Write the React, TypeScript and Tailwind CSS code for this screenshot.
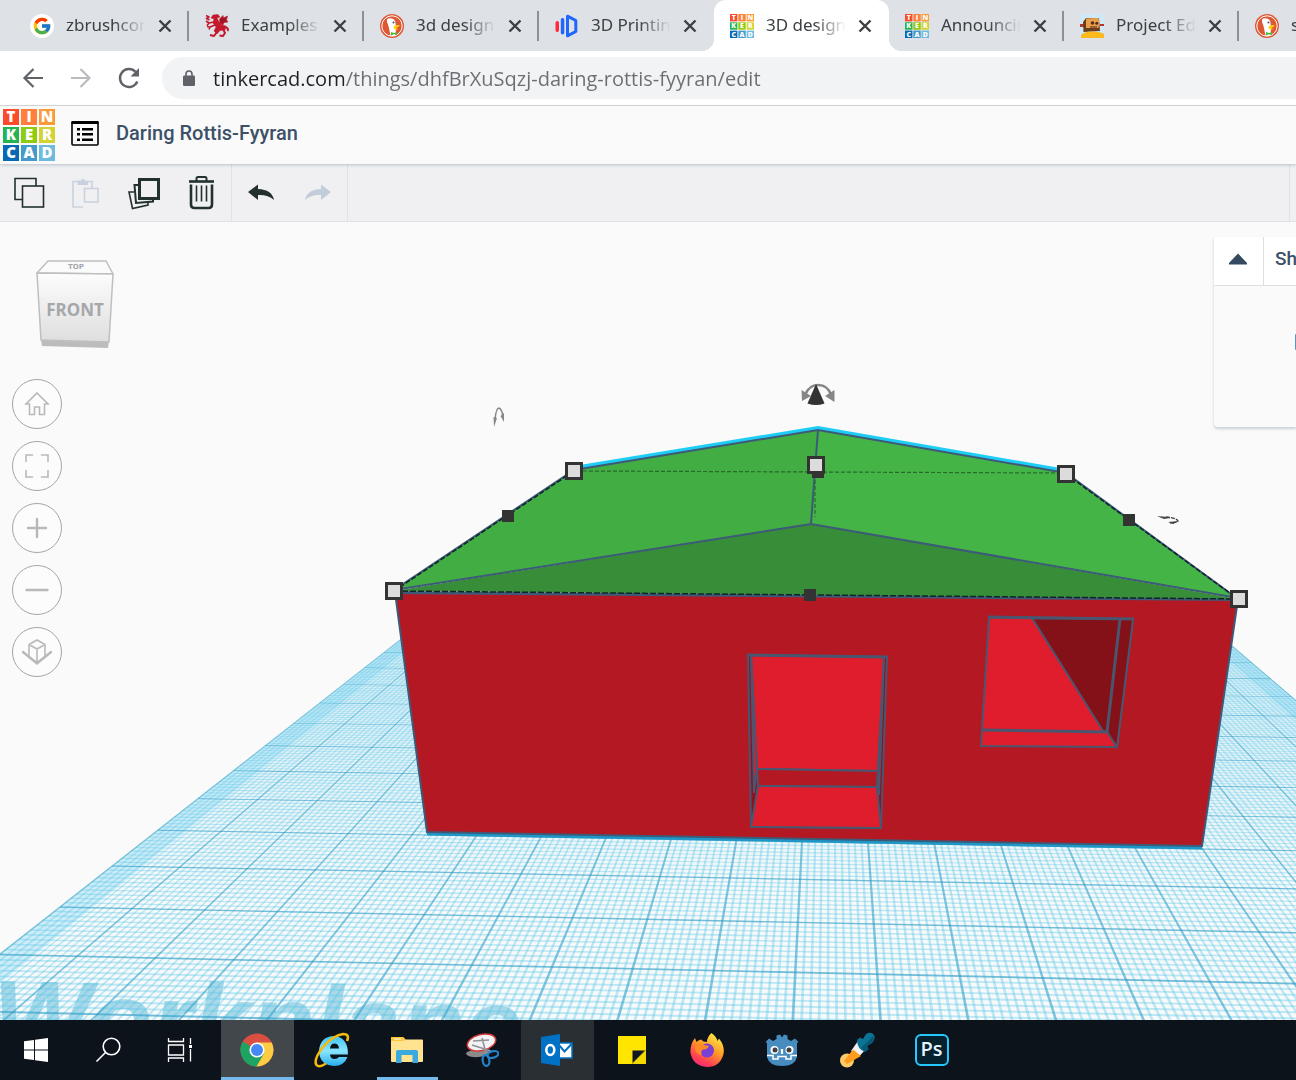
import type { ReactNode } from 'react';
import { FcGoogle } from 'react-icons/fc';

const LOGO_CELLS = [
  ['T', '#fb4b2b'], ['I', '#ff7f3b'], ['N', '#fc9a36'],
  ['K', '#24b552'], ['E', '#8fcb10'], ['R', '#d3d433'],
  ['C', '#0869b5'], ['A', '#4499cd'], ['D', '#6ebbe0'],
];

const TinkercadLogo = ({ className }: { className: string }) => (
  <svg viewBox="0 0 52 52" className={className} aria-hidden="true">
    {LOGO_CELLS.map(([letter, color], i) => {
      const x = (i % 3) * 18;
      const y = Math.floor(i / 3) * 18;
      return (
        <g key={letter}>
          <rect x={x} y={y} width="16" height="16" fill={color} />
          <text x={x + 8} y={y + 13} textAnchor="middle" fontSize="15" fontWeight="800" fill="#fff" fontFamily="Open Sans, sans-serif">
            {letter}
          </text>
        </g>
      );
    })}
  </svg>
);

const DragonIcon = () => (
  <svg viewBox="0 0 24 24" className="size-6" fill="none" stroke="#c4182c" strokeLinejoin="round">
    <path d="M8 1L13 0.500L15 3L12 4L13.500 7L17 11L21 12L20 16L15 16.500L12 20L9 17L11 13L8 9L9 5L6 4Z" fill="#c4182c" strokeWidth="0.500" />
    <path d="M9 8L4 9L1 7M4 9L2 11.500M10 11L5 13L2 12.500M5 13L4 15.500M1 1.500L4 3L1.500 4.500L4.500 6" strokeWidth="1.600" />
    <path d="M15 9L14.500 5L18 1.500L18.500 4L22.500 2L21.500 6L23 8L19 8.500L18 11Z" fill="#a31526" strokeWidth="0.600" />
    <path d="M12 18L9 22L5 21M18 15L20 19L18 22L14.500 21.500M20 13Q24 14 22.500 17" strokeWidth="2" />
  </svg>
);

const DuckIcon = () => (
  <svg viewBox="0 0 24 24" className="size-6">
    <circle cx="12" cy="12" r="12" fill="#de5833" />
    <circle cx="12" cy="12" r="10.2" fill="none" stroke="#fff" strokeWidth="1" />
    <path d="M7 5.500C9 3.600 14 4 15.300 7.500L16 13L15.500 21.500Q12.500 22.500 10.500 21.500L8.500 12Q6.300 8 7 5.500Z" fill="#fff" />
    <path d="M14 12Q18 10.500 20 11.500Q18 13.500 15.500 14Q18 14.500 18 15.300Q14 16 13.500 14Z" fill="#fdd20a" />
    <path d="M11 18L14 19L17 18V21L14 20.300L11 21.500Z" fill="#4cba3c" />
    <circle cx="13.500" cy="8.500" r="1" fill="#2d4f8e" />
  </svg>
);

const PrintingIcon = () => (
  <svg viewBox="0 0 24 24" className="size-6">
    <rect x="0.500" y="7" width="3.500" height="11" rx="1.700" fill="#ff2b3d" />
    <rect x="5.800" y="4" width="3.500" height="16.500" rx="1.700" fill="#1f66ff" />
    <path d="M12.500 2.200L20.800 6.500V17.500L12.500 21.800Z" fill="none" stroke="#1f66ff" strokeWidth="3" strokeLinejoin="round" />
  </svg>
);

const RobotIcon = () => (
  <svg viewBox="0 0 24 24" className="size-6">
    <rect width="24" height="24" rx="3" fill="#cfe9f8" />
    <path d="M0 10H4V13H0ZM20 10H24V12H20Z" fill="#b8342c" />
    <path d="M3 8L6 4L19 4.500L20 17L3.500 18Z" fill="#6b3d1e" />
    <path d="M6 4.500L18 4L19.500 7L18.500 14L6 14Z" fill="#e8a04a" />
    <circle cx="12.500" cy="9" r="1.800" fill="#5a2a18" />
    <circle cx="16.800" cy="9.300" r="1.500" fill="#5a2a18" />
    <path d="M10 12.500H17V13.500H10Z" fill="#4c2413" />
    <path d="M1 24V21Q4 17.500 12 17.500Q21 17.500 24 20V24Z" fill="#fbb91b" />
  </svg>
);

const CloseIcon = () => (
  <svg viewBox="0 0 14 14" className="size-3.5">
    <path d="M1.500 1.500L12.500 12.500M12.500 1.500L1.500 12.500" stroke="#3c4043" strokeWidth="2.400" />
  </svg>
);

type Tab = { title: string; icon: ReactNode; active?: boolean; divider?: boolean };

const TABS: Tab[] = [
  {
    title: 'zbrushcore',
    icon: <span className="flex size-6 items-center justify-center rounded-full bg-white"><FcGoogle className="size-5" /></span>,
    divider: true,
  },
  { title: 'Examples', icon: <DragonIcon />, divider: true },
  { title: '3d design', icon: <DuckIcon />, divider: true },
  { title: '3D Printing', icon: <PrintingIcon /> },
  { title: '3D design', icon: <TinkercadLogo className="size-6" />, active: true },
  { title: 'Announcing', icon: <TinkercadLogo className="size-6" />, divider: true },
  { title: 'Project Edit', icon: <RobotIcon />, divider: true },
  { title: 'stl files', icon: <DuckIcon /> },
];

const TabStrip = () => (
  <nav aria-label="Browser tabs" className="flex h-[51px] overflow-hidden bg-[#dee1e6] pl-3.5">
    {TABS.map((tab, i) => (
      <div
        key={i}
        className={`relative flex w-[175px] shrink-0 items-center pl-4 ${tab.active ? 'rounded-t-xl bg-white' : ''}`}
      >
        {tab.active && (
          <>
            <span className="absolute bottom-0 -left-3 size-3 bg-[radial-gradient(circle_at_0_0,#dee1e6_12px,#fff_12px)]" />
            <span className="absolute -right-3 bottom-0 size-3 bg-[radial-gradient(circle_at_100%_0,#dee1e6_12px,#fff_12px)]" />
          </>
        )}
        {tab.icon}
        <a
          href="#"
          className="ml-3 w-20 overflow-hidden pb-0.5 font-['Noto_Sans',sans-serif] text-[17px] leading-6 whitespace-nowrap text-[#3c4043] [mask-image:linear-gradient(to_right,black_60%,transparent)]"
        >
          {tab.title}
        </a>
        <button type="button" aria-label="Close tab" className="ml-3">
          <CloseIcon />
        </button>
        {tab.divider && <span className="absolute top-[11px] right-0 h-[30px] w-0.5 bg-[#8d9196]" />}
      </div>
    ))}
  </nav>
);

const AddressBar = () => (
  <div className="flex h-[55px] items-center border-b border-[#d9dadc] bg-white">
    <div className="flex gap-6 pl-[21px] text-[#5f6368]">
      <button type="button" aria-label="Back">
        <svg viewBox="0 0 24 24" className="size-6" fill="none" stroke="currentColor" strokeWidth="2.200">
          <path d="M22 12H4M12.500 3L3.500 12L12.500 21" />
        </svg>
      </button>
      <button type="button" aria-label="Forward" className="text-[#b9bbbe]">
        <svg viewBox="0 0 24 24" className="size-6" fill="none" stroke="currentColor" strokeWidth="2.200">
          <path d="M2 12H20M11.500 3L20.500 12L11.500 21" />
        </svg>
      </button>
      <button type="button" aria-label="Reload">
        <svg viewBox="0 0 24 24" className="size-6" fill="none" stroke="currentColor" strokeWidth="2.400">
          <path d="M20.300 15.500A9 9 0 1 1 18.500 5.800" />
          <path d="M22 2V10.500H13.500Z" fill="currentColor" stroke="none" />
        </svg>
      </button>
    </div>
    <label className="ml-[21px] flex h-[42px] flex-1 items-center rounded-l-full bg-[#f1f3f4] pl-[21px]">
      <svg viewBox="0 0 12 16" className="h-4 w-3" fill="#5f6368">
        <rect y="5.500" width="12" height="10.500" rx="1.300" />
        <path d="M3 6.500V4A3 3 0 0 1 9 4V6.500" fill="none" stroke="#5f6368" strokeWidth="1.600" />
      </svg>
      <input
        aria-label="Address"
        defaultValue="tinkercad.com/things/dhfBrXuSqzj-daring-rottis-fyyran/edit"
        className="ml-[18px] flex-1 bg-[linear-gradient(to_right,#202124_131px,#6a6e72_131px)] bg-clip-text pt-0.5 text-[20px] text-transparent outline-none"
      />
    </label>
  </div>
);

const DesignHeader = () => (
  <header className="relative z-10 flex h-[58px] items-center bg-[#fafafa] pl-[3px] shadow-[0_1px_3px_rgba(60,85,120,0.3)]">
    <TinkercadLogo className="size-[52px]" />
    <button type="button" aria-label="Designs" className="mb-1 ml-4">
      <svg viewBox="0 0 28 25" className="h-[25px] w-7" fill="#000">
        <rect x="1" y="1" width="26" height="23" rx="1" fill="none" stroke="#000" strokeWidth="1.600" />
        <rect x="0.500" y="0" width="27" height="3" />
        <path d="M6 7H9V9.500H6ZM6 12H9V14.500H6ZM6 17.500H9V20H6ZM11 7H22V9.500H11ZM11 12H22V14.500H11ZM11 17.500H22V20H11Z" />
      </svg>
    </button>
    <h1 className="mb-1 ml-[17px] font-['Roboto',sans-serif] text-[20px] font-medium text-[#3c5168]">Daring Rottis-Fyyran</h1>
  </header>
);

const EditToolbar = () => (
  <div className="flex h-[58px] border-b border-[#dfe1e5] bg-[#f0f0f2] text-[#22302f]">
    <div className="flex w-[232px] items-center border-r border-[#dfe1e5] pl-3">
      <button type="button" aria-label="Copy">
        <svg viewBox="0 0 34 34" className="size-[34px]" fill="none" stroke="currentColor" strokeWidth="1.600">
          <path d="M10 23.500H3V2.500H24V10" />
          <rect x="10.500" y="10" width="21" height="21" />
        </svg>
      </button>
      <button type="button" aria-label="Paste" className="ml-[22px] text-[#c9d2dc]" disabled>
        <svg viewBox="0 0 34 34" className="size-[34px]" fill="none" stroke="currentColor" strokeWidth="1.600">
          <path d="M15 31H5V5.500H10M20 5.500H24V12" />
          <path d="M9.500 4.500H13Q15 0.500 17 4.500H20V9H9.500Z" fill="currentColor" stroke="none" />
          <rect x="16.500" y="12.500" width="13.500" height="13.500" />
        </svg>
      </button>
      <button type="button" aria-label="Duplicate" className="ml-[25px]">
        <svg viewBox="0 0 34 34" className="size-[34px]" fill="none" stroke="currentColor" strokeWidth="1.600">
          <rect x="12.500" y="3.500" width="19" height="19" strokeWidth="3" />
          <path d="M12 9H7.500L9 27L26 25.500V23" strokeWidth="2" />
          <path d="M7 16H2L5.500 32.500L21 29V27" />
        </svg>
      </button>
      <button type="button" aria-label="Delete" className="ml-[23px]">
        <svg viewBox="0 0 34 34" className="size-[34px]" fill="none" stroke="currentColor" strokeWidth="2">
          <path d="M5 5.500H30" strokeWidth="2.600" />
          <path d="M12.500 5V2.500Q12.500 1 14 1H21Q22.500 1 22.500 2.500V5" />
          <path d="M7 8.500V28.500Q7 32 10.500 32H24.500Q28 32 28 28.500V8.500" strokeWidth="2.600" />
          <path d="M12.500 9.500V25.500M17.500 9.500V25.500M22.500 9.500V25.500" strokeWidth="1.600" />
        </svg>
      </button>
    </div>
    <div className="flex w-[116px] items-center border-r border-[#dfe1e5] pl-4">
      <button type="button" aria-label="Undo">
        <svg viewBox="0 0 26 18" className="h-[18px] w-[26px]" fill="currentColor">
          <path d="M0 8L10 0.500V5Q24 5.500 26 16Q20 10.500 10 11V16Z" />
        </svg>
      </button>
      <button type="button" aria-label="Redo" className="ml-[31px] text-[#c3cdd9]" disabled>
        <svg viewBox="0 0 26 18" className="h-[18px] w-[26px]" fill="currentColor">
          <path d="M26 8L16 0.500V5Q2 5.500 0 16Q6 10.500 16 11V16Z" />
        </svg>
      </button>
    </div>
    <div className="mr-1.5 flex-1 border-r border-[#dfe1e5]" />
  </div>
);

// Projects workplane units (20 columns wide) to canvas pixels.
const project = (u: number, v: number) => {
  const s = u / 20;
  const t = v / 10;
  const w = 1 - 0.02889 * s - 0.42131 * t;
  const x = (384.3 + 831 * s - 349.6 * t) / w;
  const y = (652.3 - 8.9 * s - 127.4 * t) / w;
  return `${x.toFixed(2)} ${y.toFixed(2)}`;
};

const FAR = -3;
const NEAR = 13;

const quad = (u0: number, v0: number, u1: number, v1: number) =>
  `M${project(u0, v0)}L${project(u1, v0)}L${project(u1, v1)}L${project(u0, v1)}Z`;

const gridLines = (step: number, half: number) => {
  const columns: string[] = [];
  const rows: string[] = [];
  for (let i = 0; i <= 20 / step; i++) columns.push(quad(i * step - half, FAR, i * step + half, NEAR));
  for (let i = 0; i <= (NEAR - FAR) / step; i++) {
    const v = FAR + i * step;
    rows.push(quad(0, v - half, 20, v + half));
  }
  return { columns: columns.join(''), rows: rows.join('') };
};

const minor = gridLines(0.1, 0.016);
const major = gridLines(1, 0.015);

const Handle = ({ x, y }: { x: number; y: number }) => (
  <rect x={x - 7.5} y={y - 7.5} width="15" height="15" fill="#dcdcdc" stroke="#333" strokeWidth="3" />
);

const SideHandle = ({ x, y }: { x: number; y: number }) => (
  <rect x={x - 6} y={y - 6} width="12" height="12" fill="#333" />
);

const Scene = () => (
  <svg
    viewBox="0 222 1296 798"
    preserveAspectRatio="xMinYMin slice"
    className="absolute inset-0 size-full"
    role="img"
    aria-label="House model on the workplane"
  >
    <defs>
      <linearGradient id="distance" gradientUnits="userSpaceOnUse" x1="0" y1="640" x2="0" y2="900">
        <stop offset="0" stopColor="#6fcbec" stopOpacity="0.3" />
        <stop offset="1" stopColor="#6fcbec" stopOpacity="0" />
      </linearGradient>
    </defs>
    <path d={quad(0, FAR, 20, NEAR)} fill="#f8fafa" />
    <path d={quad(0, FAR, 20, NEAR)} fill="url(#distance)" />
    <path d={quad(0, FAR, 0.45, NEAR)} fill="#8fdaf2" opacity="0.4" />
    <path d={quad(19.55, FAR, 20, NEAR)} fill="#8fdaf2" opacity="0.4" />
    <text
      x="-8"
      y="1053"
      transform="rotate(1 0 1053)"
      fontFamily="Liberation Sans, sans-serif"
      fontSize="104"
      fontWeight="700"
      fontStyle="italic"
      fill="#a9d9e8"
    >
      Workplane
    </text>
    <path d={minor.columns} fill="#55c4ea" opacity="0.36" />
    <path d={minor.rows} fill="#55c4ea" opacity="0.36" />
    <path d={major.columns} fill="#2a94bd" opacity="0.42" />
    <path d={major.rows} fill="#2a94bd" opacity="0.5" />

    {/* walls */}
    <path d="M427 833L1202 847" stroke="#1f97c6" strokeWidth="5" />
    <path d="M395 592L1238 599L1202 846L427 832Z" fill="#b41822" stroke="#3d5a78" strokeWidth="2" strokeLinejoin="round" />

    {/* door */}
    <g stroke="#4a5670" strokeWidth="2" fill="none">
      <path d="M748 655L887 657L881 828L751 827Z" fill="#8c1220" />
      <path d="M751 655L884 657L878 771L757 769Z" fill="#e01d2c" />
      <path d="M751 655L754 793L757 769ZM884 657L879 795L878 771Z" fill="#e01d2c" />
      <path d="M757 769L878 771L877 787L758 786Z" fill="#b41822" />
      <path d="M758 786L877 787L881 828L751 827Z" fill="#e01d2c" />
      <path d="M747 655L888 657" strokeWidth="3" />
    </g>

    {/* window */}
    <g stroke="#4a5670" strokeWidth="2" fill="none">
      <path d="M989 617L1133 619L1117 747L981 746Z" fill="#e01d2c" />
      <path d="M1032 618L1133 619L1117 747L1107 732L1103 731Z" fill="#841018" />
      <path d="M1120 619L1107 732L982 730" strokeWidth="3" />
      <path d="M988 617L1134 619" strokeWidth="3" />
    </g>

    {/* roof */}
    <path d="M574 468L818 428L1066 471" fill="none" stroke="#1ecdf5" strokeWidth="4" />
    <path d="M394 590L574 470L818 430L811 524Z" fill="#42ad43" />
    <path d="M818 430L1066 473L1238 599L811 524Z" fill="#45b447" />
    <path d="M394 591L811 524L1238 599Z" fill="#378d38" />
    <g fill="none" stroke="#3d5a78" strokeWidth="2">
      <path d="M394 590L574 470L818 430L1066 473L1238 599" />
      <path d="M818 430L811 524M394 590L811 524L1238 598M394 593L1238 600" />
    </g>
    <g fill="none" stroke="#10242a">
      <path d="M394 591L1238 599" strokeWidth="1.500" strokeDasharray="6 2" />
      <path d="M394 591L574 471M1066 474L1238 599" strokeWidth="1.500" strokeDasharray="5 2" />
      <path d="M583 471L1057 473M815 480V517" strokeDasharray="4 2" stroke="#256b2a" strokeWidth="1.200" />
    </g>

    <SideHandle x={508} y={516} />
    <SideHandle x={818} y={472} />
    <SideHandle x={810} y={595} />
    <SideHandle x={1129} y={520} />
    <Handle x={574} y={471} />
    <Handle x={816} y={465} />
    <Handle x={1066} y={474} />
    <Handle x={394} y={591} />
    <Handle x={1239} y={599} />

    {/* rotate arrows and lift cone */}
    <path d="M805 395Q809 385 818 385Q828 385 831 395" fill="none" stroke="#868686" strokeWidth="2.500" />
    <path d="M801.500 390L802 401L811 396ZM834.500 390L834.500 402L825 396Z" fill="#868686" />
    <path d="M816 384L807.500 403.500Q816 406.500 824.500 403.500Z" fill="#333" />
    <path d="M495 420Q496 408 499 408Q502 409 503 417" fill="none" stroke="#868686" strokeWidth="1.500" />
    <path d="M493.500 417L497 418L494 427ZM500.500 416L504 413V422Z" fill="#868686" />
    <path d="M1157 516L1168 517L1170 518L1164 519ZM1168 522L1179 521L1173 524Z" fill="#444" />
    <path d="M1166 517Q1177 518 1178 521Q1176 523 1170 523" fill="none" stroke="#444" strokeWidth="1.300" strokeDasharray="4 1" />
  </svg>
);

const ViewCube = () => (
  <svg viewBox="0 0 80 90" className="ml-6 h-[90px] w-20" role="img" aria-label="View cube">
    <defs>
      <linearGradient id="cubeFront" x1="0" y1="0" x2="0" y2="1">
        <stop offset="0" stopColor="#fdfdfd" />
        <stop offset="1" stopColor="#dedede" />
      </linearGradient>
    </defs>
    <path d="M5 81L73 81L72 89L6 87Z" fill="#bcbcbc" />
    <path d="M12 2L70 2L77 15L1 14Z" fill="#fbfbfb" stroke="#bfbfbf" strokeWidth="1.500" />
    <path d="M1 14L77 15L73 83L5 81Z" fill="url(#cubeFront)" stroke="#bfbfbf" strokeWidth="1.500" />
    <text x="40" y="10" textAnchor="middle" fontSize="7" fontWeight="700" fill="#a5a7ab" fontFamily="DejaVu Sans, sans-serif">TOP</text>
    <text x="39" y="57" textAnchor="middle" fontSize="17" fontWeight="700" fill="#a5a7ab" fontFamily="Noto Sans, sans-serif">FRONT</text>
  </svg>
);

const VIEW_BUTTONS = [
  { label: 'Home view', icon: <path d="M18 7L29 18H25.500V28.500H20.500V21H15.500V28.500H10.500V18H7Z" strokeWidth="1.600" /> },
  { label: 'Fit view', icon: <path d="M7 13.500V7H13.500M22.500 7H29V13.500M29 22.500V29H22.500M13.500 29H7V22.500" strokeWidth="1.600" /> },
  { label: 'Zoom in', icon: <path d="M18 9V27M9 18H27" /> },
  { label: 'Zoom out', icon: <path d="M7.500 18H28.500" /> },
  {
    label: 'Perspective',
    icon: (
      <>
        <path d="M4 18L18 29.500L32 18" />
        <path d="M10 10.500L18 6L26 10.500V23L18 28.500L10 23ZM10 10.500L18 15L26 10.500M18 15V28.500" strokeWidth="1.600" />
      </>
    ),
  },
];

const ViewControls = () => (
  <div className="relative flex w-fit flex-col pt-[37px] pl-3">
    <ViewCube />
    <div className="mt-[30px] flex flex-col gap-3">
      {VIEW_BUTTONS.map(button => (
        <button
          key={button.label}
          type="button"
          aria-label={button.label}
          className="flex size-[50px] items-center justify-center rounded-full border border-[#a3a5a8] bg-[#fcfcfc]"
        >
          <svg viewBox="0 0 36 36" className="size-9" fill="none" stroke="#b9b9b9" strokeWidth="2.400" strokeLinecap="round">
            {button.icon}
          </svg>
        </button>
      ))}
    </div>
  </div>
);

const ShapePanel = () => (
  <section className="absolute top-[15px] right-0 w-[82px] overflow-hidden rounded-bl bg-[#fafafa] shadow-[0_2px_3px_rgba(60,85,120,0.25)]">
    <div className="flex h-[49px] border-b border-[#dcdfe3] bg-white">
      <button type="button" aria-label="Collapse panel" className="flex w-[50px] shrink-0 items-center justify-center border-r border-[#dcdfe3] pr-0.5 pb-1">
        <svg viewBox="0 0 18 12" className="h-3 w-[18px]" fill="#344a60">
          <path d="M9 0.500L18 10V11.500H0V10Z" />
        </svg>
      </button>
      <h2 className="pt-2 pl-[11px] font-['Roboto',sans-serif] text-[19px] font-medium text-[#3c5168]">Shape</h2>
    </div>
    <div className="flex h-[141px] justify-end pt-12">
      <span className="h-4 w-px rounded-l-full bg-[#5b93c4]" />
    </div>
  </section>
);

const WindowsIcon = () => (
  <svg viewBox="0 0 24 24" className="size-6" fill="#fff">
    <path d="M0 3.300L10 2V11.500H0ZM11 1.800L24 0V11.500H11ZM0 12.500H10V22L0 20.700ZM11 12.500H24V24L11 22.200Z" />
  </svg>
);

const SearchIcon = () => (
  <svg viewBox="0 0 26 26" className="size-[26px]" fill="none" stroke="#fff" strokeWidth="1.600">
    <circle cx="16.500" cy="9.500" r="8.300" />
    <path d="M10.500 15.500L1.500 24.500" />
  </svg>
);

const TaskViewIcon = () => (
  <svg viewBox="0 0 26 24" className="h-6 w-[26px]" fill="none" stroke="#fff" strokeWidth="1.300">
    <path d="M1.500 0V3.500H16.500V0M1.500 24V20H16.500V24M1.500 7H16.500V17H1.500ZM23.500 0V6M23.500 11V23.500" />
    <rect x="22" y="7" width="3" height="3" fill="#fff" stroke="none" />
  </svg>
);

const ChromeIcon = () => (
  <svg viewBox="0 0 34 34" className="size-[34px]">
    <circle cx="17" cy="17" r="16.500" fill="#d94f41" />
    <path d="M17 17L2.800 8.600A16.500 16.500 0 0 0 17 33.500L24 21Z" fill="#1da362" />
    <path d="M17 9.500H31.700A16.500 16.500 0 0 1 16.500 33.500L24 20.500Z" fill="#fccc44" />
    <circle cx="17" cy="17" r="7.600" fill="#fff" />
    <circle cx="17" cy="17" r="6" fill="#4688f4" />
  </svg>
);

const ExplorerEIcon = () => (
  <svg viewBox="0 0 36 36" className="size-9" fill="none">
    <defs>
      <linearGradient id="ieBlue" x1="0" y1="0" x2="0" y2="1">
        <stop offset="0" stopColor="#3fc4f4" />
        <stop offset="0.500" stopColor="#8ae6ff" />
        <stop offset="1" stopColor="#27aeea" />
      </linearGradient>
    </defs>
    <path d="M34 22.500H16Q16.500 27 20.500 27Q23.500 27 25 25H33.500Q30 34 20 34Q5.500 33 5 19Q6 4.500 20 4Q34 5 34 22.500ZM16 16.500H25Q24.500 11.500 20.500 11.500Q16.500 11.500 16 16.500Z" fill="url(#ieBlue)" fillRule="evenodd" />
    <path d="M33 9Q36 2 29 2Q20 3 9 15Q-1 28 2.500 33Q5 36 12 31.500" stroke="#f6b90e" strokeWidth="2.600" />
  </svg>
);

const FolderIcon = () => (
  <svg viewBox="0 0 32 28" className="h-7 w-8">
    <path d="M0 2Q0 1 1 1H12L14.500 3.500H31Q32 3.500 32 4.500V25Q32 26 31 26H1Q0 26 0 25Z" fill="#ffe391" />
    <path d="M0 5V2Q0 1 1 1H12L14.500 3.500L12 5Z" fill="#ffc533" />
    <path d="M3 3H10" stroke="#fff" />
    <path d="M5 27V16Q5 14 7 14H25Q27 14 27 16V27H21.500V19H10.500V27Z" fill="#3aa9e0" />
  </svg>
);

const SnipIcon = () => (
  <svg viewBox="0 0 34 34" className="size-[34px]" fill="none">
    <path d="M1 20Q8 14 26 18Q20 25 8 24Q1 23 1 20Z" fill="#8a8a8a" />
    <ellipse cx="16.500" cy="9.500" rx="14.500" ry="8" transform="rotate(-14 16.500 9.500)" fill="#f3f3f5" stroke="#d73a3a" strokeWidth="1.500" />
    <path d="M17 5L21 20M7 12L26 18M8 8L24 7" stroke="#8e9196" strokeWidth="1.500" />
    <ellipse cx="28" cy="21.500" rx="5.500" ry="3.200" transform="rotate(-15 28 21.500)" stroke="#2483cc" strokeWidth="2.200" />
    <ellipse cx="21" cy="27.500" rx="3.300" ry="5.500" transform="rotate(-10 21 27.500)" stroke="#2483cc" strokeWidth="2.200" />
  </svg>
);

const OutlookIcon = () => (
  <svg viewBox="0 0 32 32" className="size-8" fill="none">
    <rect x="17" y="9" width="14" height="15" fill="#fff" stroke="#0072c6" strokeWidth="1.500" />
    <path d="M17 10L23.500 17.500L31 9.500" stroke="#0072c6" strokeWidth="2" />
    <path d="M0 3L19 0V32L0 29Z" fill="#0072c6" />
    <ellipse cx="9.300" cy="16" rx="4" ry="5" stroke="#fff" strokeWidth="2.600" />
  </svg>
);

const NotesIcon = () => (
  <svg viewBox="0 0 28 28" className="size-7">
    <path d="M0 0H28V14L14 28H0Z" fill="#ffe500" />
    <path d="M14.500 14.500H27L14.500 27Z" fill="#111820" />
    <path d="M28 14V28H14Z" fill="#f2d900" />
  </svg>
);

const FirefoxIcon = () => (
  <svg viewBox="0 0 34 34" className="size-[34px]">
    <defs>
      <linearGradient id="foxFlame" x1="0.800" y1="0" x2="0.250" y2="1">
        <stop offset="0" stopColor="#fff04a" />
        <stop offset="0.450" stopColor="#ff9a26" />
        <stop offset="0.800" stopColor="#ff4055" />
        <stop offset="1" stopColor="#f0277c" />
      </linearGradient>
    </defs>
    <path d="M21.500 0Q26 3 27.500 8L29 5.500Q35 13 33.500 21Q30 34 17 34Q3 33 0.500 20Q0 11 5 5L6.500 9Q8 7 11 6.500Q13 9 17 9Q17 4 21.500 0Z" fill="url(#foxFlame)" />
    <circle cx="17" cy="17.500" r="7" fill="#7a3fd4" />
    <path d="M5 14Q9 9 14 12L19 13Q17 17 13 16.500Q10 18 12 22Q5 21 5 14Z" fill="#ff8a24" />
  </svg>
);

const GodotIcon = () => (
  <svg viewBox="0 0 34 34" className="size-[34px]" fill="none">
    <path d="M2 31V10L0.500 9L4 5.500L8 8L11.500 6V2.500L15 1.500L17 4.500L19 1.500L22.500 2.500V6L26 8L30 5.500L33.500 9L32 10V24Q30 33 17 33Q4 33 2 24Z" fill="#478cbf" />
    <path d="M2 22.500H8V26H13V23.500H21V26H26V22.500H32" stroke="#fff" strokeWidth="1.500" />
    <circle cx="9.500" cy="17" r="4" fill="#fff" />
    <circle cx="24.500" cy="17" r="4" fill="#fff" />
    <circle cx="10" cy="17" r="2.500" fill="#414042" />
    <circle cx="24" cy="17" r="2.500" fill="#414042" />
    <path d="M17 16V21" stroke="#fff" strokeWidth="2.200" />
  </svg>
);

const PipetteIcon = () => (
  <svg viewBox="0 0 36 36" className="size-9">
    <circle cx="8" cy="28.500" r="7" fill="#fccb6a" />
    <path d="M19 9L27 17L20.500 24L12 19Z" fill="#f2f2f4" />
    <path d="M5 29L14 17.500L22 24L8 32Z" fill="#ff9c1c" />
    <path d="M18 8L21 5.500L24 7L27 2Q32 -1 35 3Q37 7 33 11L28 14L29.500 17L26 20Q18 17 18 8Z" fill="#0b7494" />
    <path d="M22 16L34 4Q36.500 8 33 11L28 14L29.500 17L26 20Z" fill="#075a75" />
  </svg>
);

const PhotoshopIcon = () => (
  <span className="flex h-8 w-[34px] items-center justify-center rounded-md border-2 border-[#26c9ff] bg-[#04212d] pb-0.5 text-[20px] leading-none font-semibold text-[#e6f6ff]">
    Ps
  </span>
);

const APPS: { label: string; icon: ReactNode; state?: 'focused' | 'running' | 'hover' }[] = [
  { label: 'Chrome', icon: <ChromeIcon />, state: 'focused' },
  { label: 'Internet Explorer', icon: <ExplorerEIcon /> },
  { label: 'File Explorer', icon: <FolderIcon />, state: 'running' },
  { label: 'Snipping Tool', icon: <SnipIcon /> },
  { label: 'Outlook', icon: <OutlookIcon />, state: 'hover' },
  { label: 'Sticky Notes', icon: <NotesIcon /> },
  { label: 'Firefox', icon: <FirefoxIcon /> },
  { label: 'Godot', icon: <GodotIcon /> },
  { label: 'Color Picker', icon: <PipetteIcon /> },
  { label: 'Photoshop', icon: <PhotoshopIcon /> },
];

const appBackground = {
  focused: 'bg-[#42474c]',
  running: '',
  hover: 'bg-[#2a2f33]',
};

const Taskbar = () => (
  <footer className="relative z-10 flex h-[60px] bg-[#0d131b]">
    <button type="button" aria-label="Start" className="flex w-18 items-center justify-center"><WindowsIcon /></button>
    <button type="button" aria-label="Search" className="flex w-18 items-center justify-center"><SearchIcon /></button>
    <button type="button" aria-label="Task View" className="flex w-18 items-center justify-center"><TaskViewIcon /></button>
    <div className="ml-[5px] flex gap-0.5">
      {APPS.map(app => (
        <button
          key={app.label}
          type="button"
          aria-label={app.label}
          className={`relative flex w-[73px] items-center justify-center pr-0.5 ${app.state ? appBackground[app.state] : ''}`}
        >
          {app.icon}
          {app.state === 'focused' && <span className="absolute inset-x-0 bottom-0 h-[3px] bg-[#76b9ed]" />}
          {app.state === 'running' && <span className="absolute inset-x-1.5 bottom-0 h-[3px] bg-[#76b9ed]" />}
        </button>
      ))}
    </div>
  </footer>
);

const App = () => {
  return (
    <div className="flex min-h-screen flex-col overflow-hidden bg-[#fafafa] font-['Open_Sans',sans-serif]">
      <TabStrip />
      <AddressBar />
      <DesignHeader />
      <EditToolbar />
      <main className="relative flex-1 overflow-hidden">
        <Scene />
        <ViewControls />
        <ShapePanel />
      </main>
      <Taskbar />
    </div>
  );
};

export default App;
